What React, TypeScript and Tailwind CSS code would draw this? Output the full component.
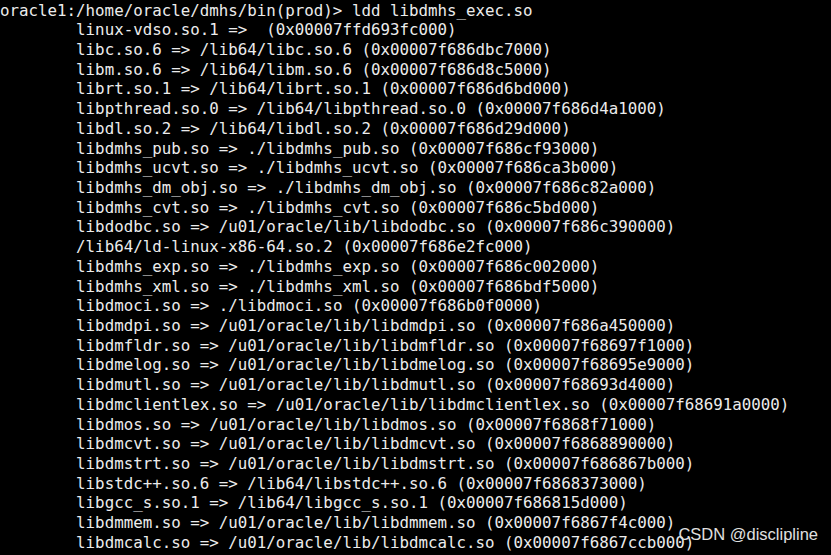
const lines = [
  "oracle1:/home/oracle/dmhs/bin(prod)> ldd libdmhs_exec.so",
  "\tlinux-vdso.so.1 =>  (0x00007ffd693fc000)",
  "\tlibc.so.6 => /lib64/libc.so.6 (0x00007f686dbc7000)",
  "\tlibm.so.6 => /lib64/libm.so.6 (0x00007f686d8c5000)",
  "\tlibrt.so.1 => /lib64/librt.so.1 (0x00007f686d6bd000)",
  "\tlibpthread.so.0 => /lib64/libpthread.so.0 (0x00007f686d4a1000)",
  "\tlibdl.so.2 => /lib64/libdl.so.2 (0x00007f686d29d000)",
  "\tlibdmhs_pub.so => ./libdmhs_pub.so (0x00007f686cf93000)",
  "\tlibdmhs_ucvt.so => ./libdmhs_ucvt.so (0x00007f686ca3b000)",
  "\tlibdmhs_dm_obj.so => ./libdmhs_dm_obj.so (0x00007f686c82a000)",
  "\tlibdmhs_cvt.so => ./libdmhs_cvt.so (0x00007f686c5bd000)",
  "\tlibdodbc.so => /u01/oracle/lib/libdodbc.so (0x00007f686c390000)",
  "\t/lib64/ld-linux-x86-64.so.2 (0x00007f686e2fc000)",
  "\tlibdmhs_exp.so => ./libdmhs_exp.so (0x00007f686c002000)",
  "\tlibdmhs_xml.so => ./libdmhs_xml.so (0x00007f686bdf5000)",
  "\tlibdmoci.so => ./libdmoci.so (0x00007f686b0f0000)",
  "\tlibdmdpi.so => /u01/oracle/lib/libdmdpi.so (0x00007f686a450000)",
  "\tlibdmfldr.so => /u01/oracle/lib/libdmfldr.so (0x00007f68697f1000)",
  "\tlibdmelog.so => /u01/oracle/lib/libdmelog.so (0x00007f68695e9000)",
  "\tlibdmutl.so => /u01/oracle/lib/libdmutl.so (0x00007f68693d4000)",
  "\tlibdmclientlex.so => /u01/oracle/lib/libdmclientlex.so (0x00007f68691a0000)",
  "\tlibdmos.so => /u01/oracle/lib/libdmos.so (0x00007f6868f71000)",
  "\tlibdmcvt.so => /u01/oracle/lib/libdmcvt.so (0x00007f6868890000)",
  "\tlibdmstrt.so => /u01/oracle/lib/libdmstrt.so (0x00007f686867b000)",
  "\tlibstdc++.so.6 => /lib64/libstdc++.so.6 (0x00007f6868373000)",
  "\tlibgcc_s.so.1 => /lib64/libgcc_s.so.1 (0x00007f686815d000)",
  "\tlibdmmem.so => /u01/oracle/lib/libdmmem.so (0x00007f6867f4c000)",
  "\tlibdmcalc.so => /u01/oracle/lib/libdmcalc.so (0x00007f6867ccb000)",
];

export default function App() {
  return (
    <div className="relative w-[831px] h-[555px] overflow-hidden bg-black">
      <pre className="pt-[0.5px] font-['DejaVu_Sans_Mono',monospace] text-[15.8px] leading-[19.72px] text-[#ececec] [tab-size:8] whitespace-pre">
        {lines.join("\n")}
      </pre>
      {/* watermark */}
      <div className="absolute right-[13px] bottom-[13.5px] font-['Liberation_Sans',Arial,sans-serif] text-[16.5px] leading-[16px] text-[#e0e0e0]">
        CSDN @disclipline
      </div>
    </div>
  );
}
